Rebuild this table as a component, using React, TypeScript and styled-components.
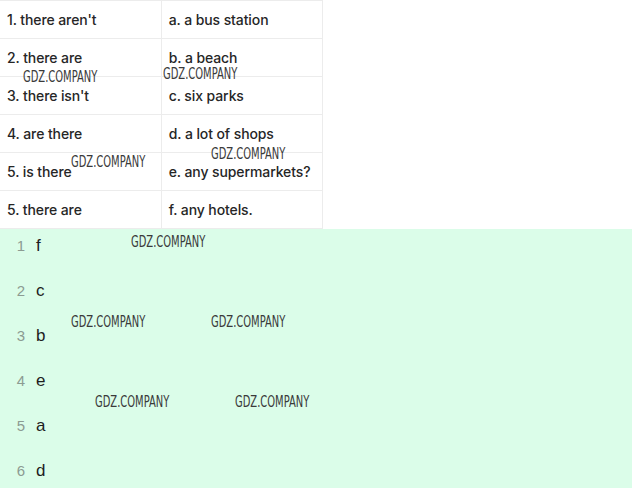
import styled, { createGlobalStyle } from 'styled-components'

const GlobalStyle = createGlobalStyle`
	html, body {
		margin: 0;
		padding: 0;
		background: #ffffff;
	}
	body {
		font-family: 'Inter', 'Lato', sans-serif;
		width: 632px;
		height: 488px;
		overflow: hidden;
	}
`

const Page = styled.div`
	position: relative;
	width: 632px;
	height: 488px;
	display: flex;
	flex-direction: column;
`

const Table = styled.table`
	border-collapse: collapse;
	width: 323px;
	table-layout: fixed;
	color: #262626;
	font-size: 14px;
	font-weight: 500;
	letter-spacing: -0.1px;
`

const Cell = styled.td`
	border: 1px solid #ececec;
	height: 37px;
	padding: 0 0 0 7px;
	vertical-align: middle;
	white-space: nowrap;
	&:first-child {
		border-left: none;
	}
`

const Answers = styled.div`
	flex: 1;
	background: #dbfde9;
	padding-top: 8px;
	display: flex;
	flex-direction: column;
`

const AnswerRow = styled.div`
	height: 45px;
	display: flex;
	align-items: flex-start;
	line-height: 18px;
`

const Num = styled.span`
	width: 25px;
	text-align: right;
	font-family: 'Liberation Sans', sans-serif;
	font-size: 15px;
	color: #8c9b92;
`

const Letter = styled.span`
	margin-left: 11px;
	font-family: 'Liberation Sans', sans-serif;
	font-size: 17px;
	color: #1e1e1e;
`

const Mark = styled.span<{ x: number; y: number }>`
	position: absolute;
	left: ${({ x }) => x}px;
	top: ${({ y }) => y}px;
	font-family: 'DejaVu Sans Condensed', 'Liberation Sans', sans-serif;
	font-size: 16px;
	line-height: 16px;
	color: #3a3a3a;
	font-weight: 300;
	transform: scaleX(0.69);
	transform-origin: left top;
	pointer-events: none;
	white-space: nowrap;
`

const rows: [string, string][] = [
	["1. there aren't", 'a. a bus station'],
	['2. there are', 'b. a beach'],
	["3. there isn't", 'c. six parks'],
	['4. are there', 'd. a lot of shops'],
	['5. is there', 'e. any supermarkets?'],
	['5. there are', 'f. any hotels.'],
]

const answers = ['f', 'c', 'b', 'e', 'a', 'd']

const marks = [
	[23, 69],
	[163, 66],
	[71, 154],
	[211, 146],
	[131, 234],
	[71, 314],
	[211, 314],
	[95, 394],
	[235, 394],
]

const App = () => (
	<Page>
		<GlobalStyle />
		<Table>
			<tbody>
				{rows.map(([left, right]) => (
					<tr key={left + right}>
						<Cell>{left}</Cell>
						<Cell>{right}</Cell>
					</tr>
				))}
			</tbody>
		</Table>
		<Answers>
			{answers.map((a, i) => (
				<AnswerRow key={a}>
					<Num>{i + 1}</Num>
					<Letter>{a}</Letter>
				</AnswerRow>
			))}
		</Answers>
		{marks.map(([x, y]) => (
			<Mark key={`${x}-${y}`} x={x} y={y}>
				GDZ.COMPANY
			</Mark>
		))}
	</Page>
)

export default App
